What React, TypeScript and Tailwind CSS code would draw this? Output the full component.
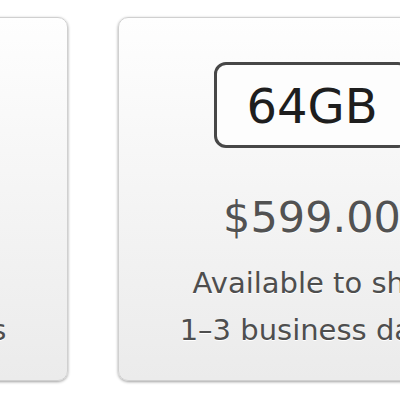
import React from 'react';

interface Plan {
  size: string;
  price: string;
}

const plans: Plan[] = [
  { size: '32GB', price: '$499.00' },
  { size: '64GB', price: '$599.00' },
];

const PlanCard = ({ plan }: { plan: Plan }) => (
  <div className="w-[388px] h-[364px] shrink-0 rounded-[10px] border border-[#d0d0d0] bg-gradient-to-b from-[#fefefe] to-[#ebebeb] shadow-[0_1px_3px_rgba(0,0,0,0.38)] flex flex-col items-center pt-[44px]">
    <div className="w-[196px] h-[86px] rounded-[12px] border-[3px] border-[#474747] bg-[#fdfdfd] flex items-center justify-center">
      <span className="text-[48px] leading-none text-[#1e1e1e] pt-[2px]">{plan.size}</span>
    </div>
    <div className="mt-[48px] text-[43px] leading-none text-[#525252] [text-shadow:0_1px_0_#fff]">
      {plan.price}
    </div>
    <div className="mt-[21px] text-[29px] leading-[47px] text-[#4e4e4e] text-center [text-shadow:0_1px_0_#fff]">
      <div>Available to ship</div>
      <div>1–3 business days</div>
    </div>
  </div>
);

export default function App() {
  return (
    <div className="w-[400px] h-[400px] overflow-hidden bg-white font-['DejaVu_Sans',sans-serif]">
      <div className="flex gap-[50px] pt-[17px] ml-[-320px] w-max">
        {plans.map((plan) => (
          <PlanCard key={plan.size} plan={plan} />
        ))}
      </div>
    </div>
  );
}
